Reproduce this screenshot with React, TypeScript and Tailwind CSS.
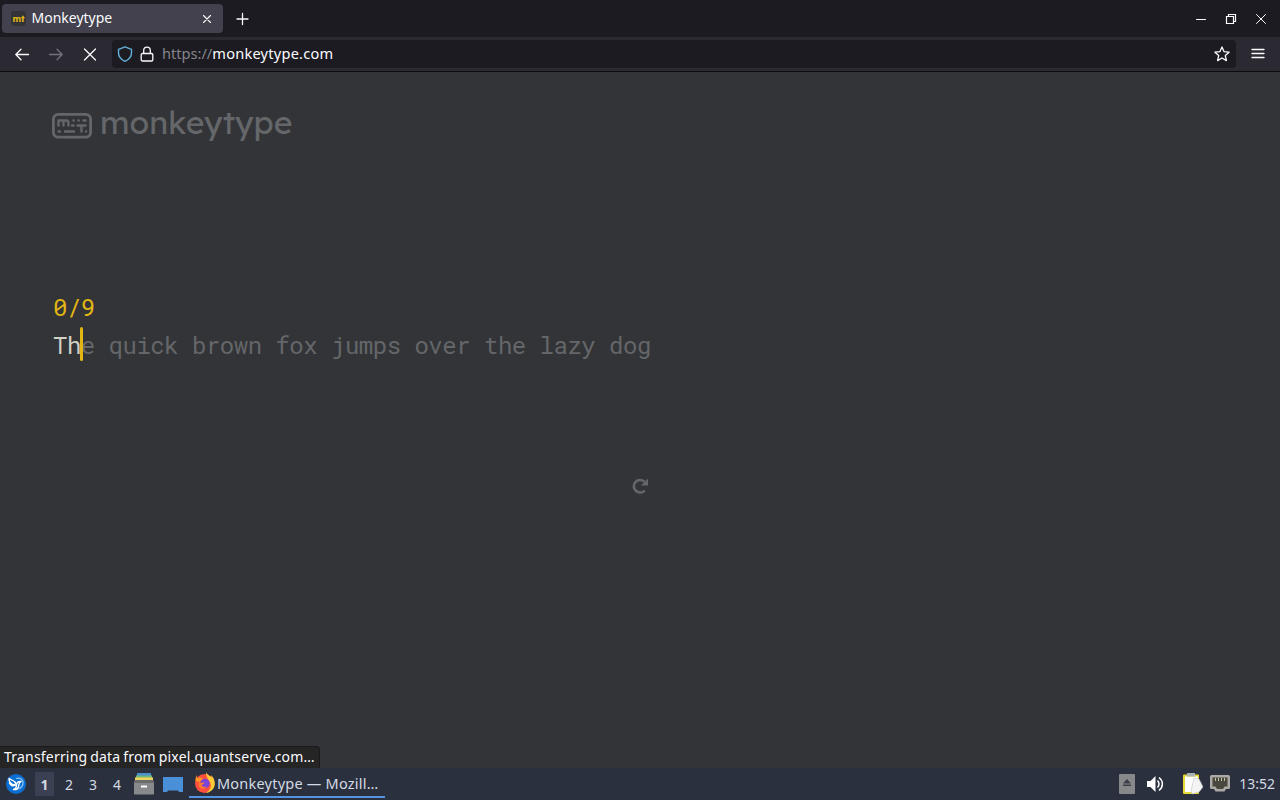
import type { ReactNode } from "react";

const WORDS = "The quick brown fox jumps over the lazy dog";
const TYPED = 2;
const WORKSPACES = ["1", "2", "3", "4"];

type IconProps = {
  size?: number;
  className?: string;
  width?: number;
  children: ReactNode;
};

function Icon({ size = 16, className = "", width = 1.2, children }: IconProps) {
  return (
    <svg
      width={size}
      height={size}
      viewBox="0 0 16 16"
      fill="none"
      stroke="currentColor"
      strokeWidth={width}
      strokeLinecap="round"
      strokeLinejoin="round"
      className={`shrink-0 ${className}`}
    >
      {children}
    </svg>
  );
}

function TabBar() {
  return (
    <div className="flex h-[37px] items-center bg-[#1c1b22]">
      <div className="ml-0.5 flex h-[29px] w-[221px] items-center rounded bg-[#42414d] pl-[9px] pr-2">
        <span className="flex size-[15px] items-center justify-center rounded-[3px] bg-[#323437] font-['Lexend_Deca','Lato'] text-[9px] leading-[15px] font-bold text-[#e2b714]">
          mt
        </span>
        <span className="ml-[5.5px] flex-1 pb-0.5 text-[14px] leading-none">Monkeytype</span>
        <Icon width={1.1}>
          <path d="M4.5 4.5l7 7M11.5 4.5l-7 7" />
        </Icon>
      </div>
      <Icon className="ml-[11px]" width={1.3}>
        <path d="M8.5 2.5v11M3 8h11" />
      </Icon>
      <div className="ml-auto flex gap-3.5 pr-[11px]">
        <Icon width={1}>
          <path d="M3.5 8.5h9" />
        </Icon>
        <Icon width={1.2}>
          <path d="M3.5 5.5h7v7h-7zM5.5 5.5v-2h7v7h-2" strokeLinejoin="miter" />
        </Icon>
        <Icon width={1}>
          <path d="M3.5 3.5l9 9M12.5 3.5l-9 9" />
        </Icon>
      </div>
    </div>
  );
}

function NavBar() {
  return (
    <div className="flex h-[35px] items-center border-b border-[#0c0c0d] bg-[#2b2a33] px-3.5">
      <Icon width={1.3}>
        <path d="M14.5 8.5H1.8M7 3.3L1.8 8.5 7 13.7" />
      </Icon>
      <Icon className="ml-[18px] text-[#73727a]" width={1.3}>
        <path d="M1.5 8.5h12.7M9 3.3L14.2 8.5 9 13.7" />
      </Icon>
      <Icon className="ml-[18px]" width={1.3}>
        <path d="M2.5 3l11 11M13.5 3l-11 11" />
      </Icon>
      <div className="ml-[14px] flex h-[28px] flex-1 items-center rounded bg-[#1c1b22] pl-[5px] pr-1.5">
        <Icon className="text-[#62b0d8]" width={1.4}>
          <path d="M8 .8L14.5 3.3V7c0 3.6-2.5 6.5-6.5 8.3C4 13.5 1.5 10.6 1.5 7V3.3z" />
        </Icon>
        <Icon className="ml-1.5" width={1.3}>
          <path d="M3.5 7.5h9a1.3 1.3 0 0 1 1.3 1.3v4.9a1.3 1.3 0 0 1-1.3 1.3h-9a1.3 1.3 0 0 1-1.3-1.3V8.8a1.3 1.3 0 0 1 1.3-1.3zM4.7 7.5v-3a3.3 3.3 0 0 1 6.6 0v3" />
        </Icon>
        <span className="ml-[7px] flex-1 pb-0.5 text-[14.6px] leading-none text-[#fbfbfe]">
          <span className="text-[#85848b]">https://</span>
          <span className="tracking-[0.22px]">monkeytype.com</span>
        </span>
        <Icon width={1.3}>
          <path d="M8 1l2.1 4.7 5 .5-3.8 3.4 1.1 5L8 12l-4.4 2.6 1.1-5L.9 6.2l5-.5z" />
        </Icon>
      </div>
      <Icon className="ml-[14px]" width={1.3}>
        <path d="M2 3.5h12M2 7.5h12M2 11.5h12" />
      </Icon>
    </div>
  );
}

function Logo() {
  return (
    <div className="flex h-9 text-[#646669]">
      <svg
        width="40"
        height="26"
        viewBox="0 0 40 26"
        fill="none"
        stroke="currentColor"
        strokeWidth="2.4"
        strokeLinecap="round"
        strokeLinejoin="round"
        className="mt-[7px]"
      >
        <rect x="1.4" y="1.4" width="37.2" height="22.8" rx="5" strokeWidth="2.8" />
        <path d="M6.5 12.5V7.5h7.5q2.500 0 2.500 2.500v2.500M11.5 7.5v5" />
        <path d="M21.5 7.5h.2M26.5 7.5h.2M31.5 7.5h2M20 12.5h1.5M25.5 12.5h8M29.5 12.5v6M6.5 18.5h1.5M13 18.5h9M34 18.5h.1" />
      </svg>
      <span className="ml-2 font-['Lexend_Deca','Lato',sans-serif] text-[32px] leading-[32px]">
        monkeytype
      </span>
    </div>
  );
}

function TypingTest() {
  return (
    <main className="flex flex-1 flex-col bg-[#323437] pl-[52px] pt-[34px]">
      <Logo />
      <div className="mt-[146px] pl-px font-['Roboto_Mono','DejaVu_Sans_Mono',monospace] text-[24px] tracking-[-0.5px] text-[#646669]">
        <div className="h-[38px] leading-[38px] text-[#e2b714]">0/9</div>
        <div className="relative h-[38px] leading-[38px]">
          <span className="text-[#d1d0c5]">{WORDS.slice(0, TYPED)}</span>
          {WORDS.slice(TYPED)}
          <span className="absolute left-[27px] top-px h-[34px] w-[3px] rounded-sm bg-[#e2b714]" />
        </div>
      </div>
      <div className="mt-[114px] flex justify-center pr-[52px] text-[#646669]">
        <Icon width={2.6}>
          <path d="M12.5 3.7A6.3 6.3 0 1 0 12.7 12.6" strokeLinecap="butt" />
          <path d="M16 .5v7H9z" fill="currentColor" stroke="none" />
        </Icon>
      </div>
      <div className="-ml-[52px] mt-auto flex h-[22px] w-80 items-center rounded-tr border border-b-0 border-l-0 border-[#191919] bg-[#252526] pb-0.5 pl-1 text-[14px] leading-none tracking-[0.2px] [word-spacing:-1px]">
        Transferring data from pixel.quantserve.com…
      </div>
    </main>
  );
}

function Taskbar() {
  return (
    <footer className="flex h-8 items-center bg-[#2b303f] text-[#d3dae3]">
      <svg width="20" height="20" viewBox="0 0 20 20" className="ml-1.5">
        <circle cx="10" cy="10" r="10" fill="#0b6fd0" />
        <path
          d="M3 4.500l5.500 3 2 3M3.500 9c1 2.500 3.500 3.500 6 2M10.500 10.500c.5-2.500 2.500-3.500 4.500-3-2.500 1-2 3-2.500 5-.5 2.500-2.500 3.500-5 3 2-.5 3-2 3-5M3 4.500c0 3.500 2.500 6 6 6.500"
          stroke="#fff"
          fill="none"
          strokeWidth="1.4"
          strokeLinecap="round"
          strokeLinejoin="round"
        />
        <path d="M10 4.500c4-1.500 7.500 1 7 5-.3 2.500-2 4.500-4 5.500" fill="none" stroke="#8fc6f5" strokeWidth="1.2" />
      </svg>
      <div className="ml-[9px] flex items-center">
        {WORKSPACES.map((name, i) => (
          <span
            key={name}
            className={`flex h-6 items-center justify-center pt-0.5 text-[14px] leading-none ${
              i === 0 ? "mr-[3px] w-[19px] bg-[#3b4152] font-bold" : "w-6"
            }`}
          >
            {name}
          </span>
        ))}
      </div>
      <svg width="20" height="22" viewBox="0 0 20 22" className="ml-[5px]">
        <path d="M3 0h14v4H3z" fill="#4b8fcc" />
        <path d="M2 2.5h16V6H2z" fill="#70b77b" />
        <path d="M1 4.5h18V9H1z" fill="#f1d35b" />
        <path d="M1 7h18l1 3v10.5a1 1 0 0 1-1 1H1a1 1 0 0 1-1-1V10z" fill="#88898a" />
        <path d="M1 7h18l1 3H0z" fill="#6b6c6c" />
        <rect x="7" y="12.5" width="6" height="2" fill="#fff" />
      </svg>
      <svg width="20" height="17" viewBox="0 0 20 17" className="ml-[9px]">
        <path d="M0 1h20v15h-4l-1-1.5H5L4 16H0z" fill="#4a90d9" />
      </svg>
      <div className="ml-1.5 flex h-[30px] w-[196px] items-center self-start border-b-2 border-[#5294e2] pl-[5px]">
        <svg width="21" height="21" viewBox="0 0 21 21" className="shrink-0">
          <circle cx="10.5" cy="11.5" r="9.5" fill="#ff4f3d" />
          <path d="M12 0c1 3 4 3.5 5.5 5.5 0-1-.3-1.5-.5-2.5 3 2.500 4.500 7 3.500 11-1.200 4-4.500 6.500-8.500 7 4-3 5.500-6 4.500-9.500C15.500 8 12 6.500 12 0z" fill="#ffc936" />
          <path d="M3 3c-.2 1.5 0 2.5.5 3C6 5 8 5.5 9 7L5.5 10 1.5 9C1.3 6.500 2 4.500 3 3z" fill="#ff9425" />
          <circle cx="11" cy="11.5" r="4.7" fill="#7a45d8" />
          <path d="M5 10c2 1.5 4 .5 6 .5-1 2-3 1.5-3.5 3 1 1.500 3 1.500 5 1-2 3.500-7 2.500-8-1z" fill="#ff7a2b" />
        </svg>
        <span className="ml-0.5 mt-0.5 whitespace-nowrap text-[14.5px] leading-none tracking-[0.22px]">
          Monkeytype — Mozill…
        </span>
      </div>
      <div className="ml-auto flex items-center pr-[5px]">
        <svg width="16" height="20" viewBox="0 0 16 20">
          <rect width="16" height="20" rx="1" fill="#87888a" />
          <path d="M8 5l4 4.5H4zM4 10.5h8V12H4z" fill="#3b3e48" />
        </svg>
        <svg width="17" height="16" viewBox="0 0 17 16" fill="none" className="ml-3">
          <path d="M0 5h3.5L8.5 0v16l-5-5H0z" fill="#fff" />
          <path d="M10.5 4.5q3 3.5 0 7M12 1.5c4.5 3.5 4.5 9.5 0 13" stroke="#fff" strokeWidth="1.5" />
        </svg>
        <svg width="20" height="22" viewBox="0 0 20 22" className="ml-[19px]">
          <rect y="1.5" width="16" height="19.5" rx="1" fill="#e6d936" />
          <path d="M2 3.5h13V19H2z" fill="#fff" />
          <path d="M4 0h8v3.5H4z" fill="#aeb3b7" />
          <path d="M11 5l5 1 4 8-4 5-7 2-1-3z" fill="#f4f4f4" stroke="#c5c5c5" strokeWidth=".6" />
        </svg>
        <svg width="20" height="18" viewBox="0 0 20 18" className="ml-[7px]">
          <path d="M1.5 0h17A1.5 1.5 0 0 1 20 1.5v11a1.5 1.5 0 0 1-1.5 1.5H16l-1.5 2.5H5.5L4 14H1.5A1.5 1.5 0 0 1 0 12.5v-11A1.5 1.5 0 0 1 1.5 0z" fill="#aaa9a5" />
          <path d="M2.5 2.5h15v9h-3L13 14H7l-1.5-2.5h-3z" fill="#49483f" />
          <path d="M5.5 3v3M8.5 3v3M11.5 3v3M14.5 3v3" stroke="#c5c1a5" />
        </svg>
        <span className="ml-[9px] text-[14px] leading-none">13:52</span>
      </div>
    </footer>
  );
}

export default function App() {
  return (
    <div className="flex h-screen w-screen flex-col overflow-hidden bg-[#323437] font-['Noto_Sans',sans-serif] text-[#fbfbfe]">
      <TabBar />
      <NavBar />
      <TypingTest />
      <Taskbar />
    </div>
  );
}
